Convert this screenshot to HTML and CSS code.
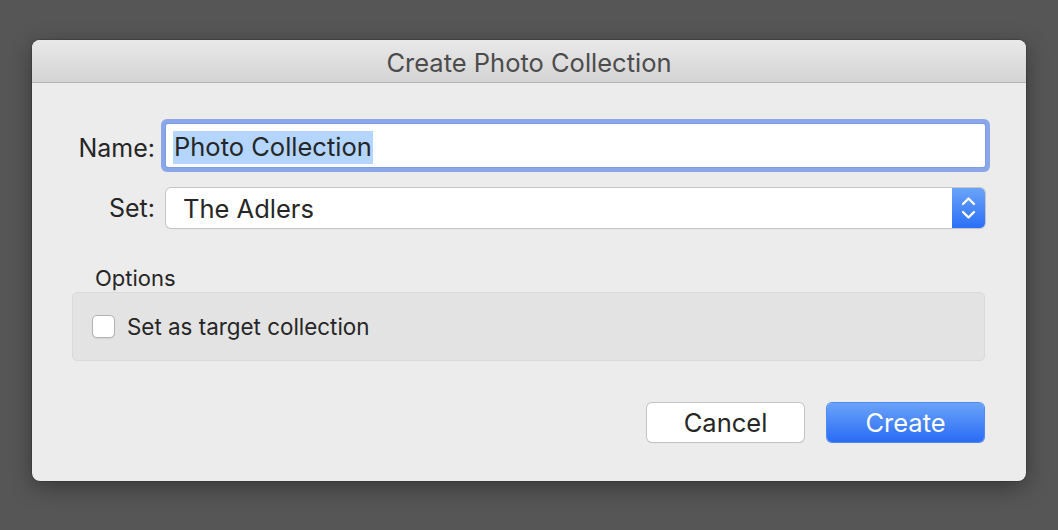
FILE: index.html
```html
<!DOCTYPE html>
<html>
<head>
<meta charset="utf-8">
<link rel="stylesheet" href="styles.css">
</head>
<body>
<div class="window">
  <div class="titlebar">Create Photo Collection</div>
  <div class="content">
    <div class="row row-name">
      <label class="label">Name:</label>
      <div class="textfield"><span class="selected">Photo Collection</span></div>
    </div>
    <div class="row row-set">
      <label class="label">Set:</label>
      <div class="select">
        <span class="select-value">The Adlers</span>
        <span class="stepper">
          <svg width="33" height="40" viewBox="0 0 33 40">
            <path d="M11 16 L16.5 10.5 L22 16" fill="none" stroke="#fff" stroke-width="2.4" stroke-linecap="round" stroke-linejoin="round"/>
            <path d="M11 24 L16.5 29.5 L22 24" fill="none" stroke="#fff" stroke-width="2.4" stroke-linecap="round" stroke-linejoin="round"/>
          </svg>
        </span>
      </div>
    </div>
    <div class="group-title">Options</div>
    <div class="group">
      <label class="check"><span class="checkbox"></span><span>Set as target collection</span></label>
    </div>
    <div class="buttons">
      <button class="btn btn-cancel">Cancel</button>
      <button class="btn btn-primary">Create</button>
    </div>
  </div>
</div>
</body>
</html>
```

FILE: styles.css
```css
html, body {
  margin: 0;
  padding: 0;
}
body {
  background: #565656;
  width: 1058px;
  height: 530px;
  overflow: hidden;
  font-family: "Inter", "Roboto", "Liberation Sans", sans-serif;
  color: #262626;
}
.window {
  margin: 40px 0 0 32px;
  width: 994px;
  height: 441px;
  background: #ececec;
  border-radius: 8px;
  overflow: hidden;
  box-shadow: 0 6px 22px rgba(0,0,0,0.35), 0 0 0 1px rgba(0,0,0,0.15);
}
.titlebar {
  height: 42px;
  border-bottom: 1px solid #b4b4b4;
  background: linear-gradient(#e9e9e9, #d4d4d4);
  text-align: center;
  line-height: 45px;
  font-size: 25.5px;
  color: #4c4c4c;
}
.content {
  padding: 41px 41px 0 40px;
}
.row {
  display: flex;
  align-items: center;
}
.label {
  width: 83px;
  text-align: right;
  font-size: 25px;
  margin-right: 11px;
  white-space: nowrap;
}
.row-name .label {
  padding-top: 4px;
}
.textfield {
  flex: 1;
  height: 43px;
  box-sizing: border-box;
  background: #fff;
  border-radius: 2px;
  box-shadow: 0 0 0 1px #7d9be0, 0 0 0 5px #8aa8e9;
  display: flex;
  align-items: center;
  padding: 3px 0 0 7px;
  font-size: 25.5px;
}
.selected {
  background: #b4d5fe;
  padding: 2px 1px 3px;
  line-height: 28px;
}
.row-set {
  margin-top: 21px;
}
.select {
  flex: 1;
  height: 40px;
  box-sizing: border-box;
  background: #fff;
  border-radius: 5px;
  box-shadow: 0 0 0 1px #c6c6c6, 0 1px 1px rgba(0,0,0,0.12);
  display: flex;
  align-items: center;
  overflow: hidden;
  font-size: 25.5px;
}
.select-value {
  flex: 1;
  padding-left: 17px;
}
.stepper {
  width: 33px;
  height: 40px;
  background: linear-gradient(#6aa4f9, #2b6ff7);
  display: block;
}
.stepper svg {
  display: block;
}
.group-title {
  margin-top: 38px;
  margin-left: 23px;
  font-size: 22px;
  line-height: 24px;
}
.group {
  margin-top: 2px;
  height: 69px;
  box-sizing: border-box;
  background: #e3e3e3;
  border: 1px solid #d9d9d9;
  border-radius: 5px;
  padding: 20px 0 0 19px;
}
.check {
  display: flex;
  align-items: center;
  font-size: 22.4px;
}
.checkbox {
  width: 23px;
  height: 23px;
  box-sizing: border-box;
  background: #fff;
  border: 1px solid #b3b3b3;
  border-radius: 5px;
  margin-right: 12px;
  box-shadow: 0 1px 1px rgba(0,0,0,0.08);
}
.buttons {
  display: flex;
  justify-content: flex-end;
  gap: 23px;
  margin-top: 42px;
  padding-right: 1px;
}
.btn {
  width: 157px;
  height: 39px;
  border-radius: 5px;
  font-family: inherit;
  font-size: 25.5px;
  padding: 0;
  border: none;
}
.btn-cancel {
  background: #fff;
  color: #262626;
  box-shadow: 0 0 0 1px #c4c4c4, 0 1px 1px rgba(0,0,0,0.15);
}
.btn-primary {
  background: linear-gradient(#6aa3f9, #2a6bf6);
  color: #fff;
  box-shadow: 0 0 0 1px #4f8af2, 0 1px 1px rgba(0,0,0,0.15);
}
```
